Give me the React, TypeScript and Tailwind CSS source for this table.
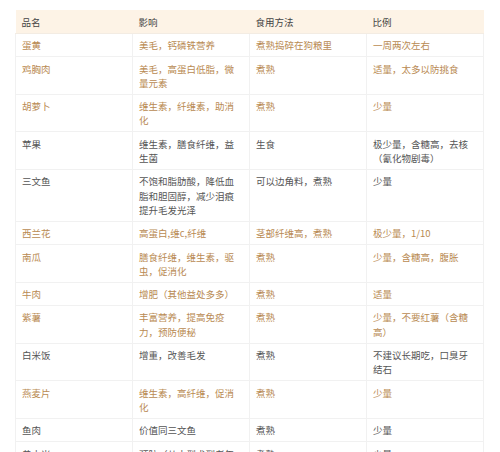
import React from "react";

type Row = { cells: [string, string, string, string]; accent: boolean };

const rows: Row[] = [
  { cells: ["蛋黄", "美毛，钙磷铁营养", "煮熟捣碎在狗粮里", "一周两次左右"], accent: true },
  { cells: ["鸡胸肉", "美毛，高蛋白低脂，微量元素", "煮熟", "适量，太多以防挑食"], accent: true },
  { cells: ["胡萝卜", "维生素，纤维素，助消化", "煮熟", "少量"], accent: true },
  { cells: ["苹果", "维生素，膳食纤维，益生菌", "生食", "极少量，含糖高，去核（氰化物剧毒）"], accent: false },
  { cells: ["三文鱼", "不饱和脂肪酸，降低血脂和胆固醇，减少泪痕提升毛发光泽", "可以边角料，煮熟", "少量"], accent: false },
  { cells: ["西兰花", "高蛋白,维c,纤维", "茎部纤维高，煮熟", "极少量，1/10"], accent: true },
  { cells: ["南瓜", "膳食纤维，维生素，驱虫，促消化", "煮熟", "少量，含糖高，腹胀"], accent: true },
  { cells: ["牛肉", "增肥（其他益处多多）", "煮熟", "适量"], accent: true },
  { cells: ["紫薯", "丰富营养，提高免疫力，预防便秘", "煮熟", "少量，不要红薯（含糖高）"], accent: true },
  { cells: ["白米饭", "增重，改善毛发", "煮熟", "不建议长期吃，口臭牙结石"], accent: false },
  { cells: ["燕麦片", "维生素，高纤维，促消化", "煮熟", "少量"], accent: true },
  { cells: ["鱼肉", "价值同三文鱼", "煮熟", "少量"], accent: false },
  { cells: ["黄小米", "预防（从小型犬到老年犬）", "煮熟", "少量"], accent: false },
];

export default function App() {
  return (
    <div
      className="w-[500px] h-[452px] overflow-hidden bg-white pt-[10px] pl-[15px]"
      style={{ fontFamily: '"Noto Sans CJK SC", "Noto Sans", sans-serif' }}
    >
      <table className="w-[469px] table-fixed border-collapse text-[9.5px] leading-[14.3px]">
        <thead>
          <tr className="bg-[#fdf3e6] text-[#444]">
            {["品名", "影响", "食用方法", "比例"].map((h) => (
              <th
                key={h}
                className="text-left font-normal align-top pl-[6px] pr-[10px] pt-[4.5px] pb-[4px] border-b border-[#f3ece3]"
              >
                {h}
              </th>
            ))}
          </tr>
        </thead>
        <tbody>
          {rows.map((r, i) => (
            <tr key={i} className={r.accent ? "text-[#b98a52]" : "text-[#555]"}>
              {r.cells.map((c, j) => (
                <td
                  key={j}
                  className="align-top pl-[6px] pr-[10px] pt-[4.5px] pb-[3.5px] border border-[#f1f1f1] break-all"
                >
                  {c}
                </td>
              ))}
            </tr>
          ))}
        </tbody>
      </table>
    </div>
  );
}
